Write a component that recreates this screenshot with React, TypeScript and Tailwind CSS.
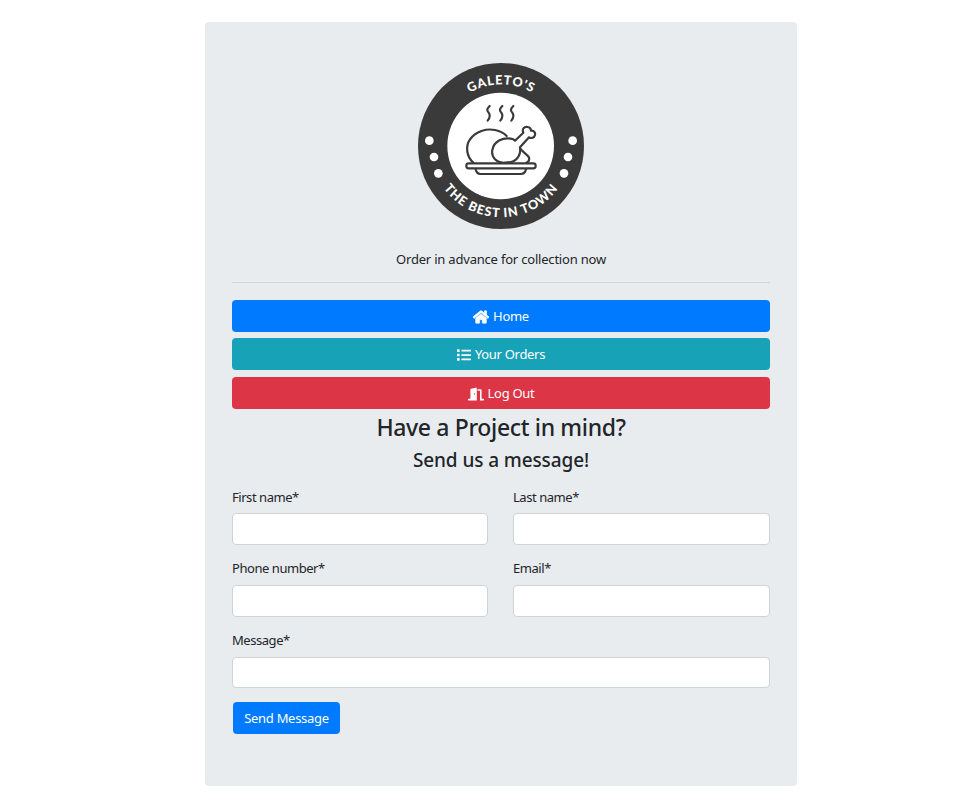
import { FaHome, FaList, FaDoorOpen } from "react-icons/fa";

function Logo() {
  return (
    <svg width="166" height="166" viewBox="39 39 498 498" className="block">
      <defs>
        <path id="topArc" d="M 103 288 A 185 185 0 0 1 473 288" />
        <path id="bottomArc" d="M 74 288 A 214 214 0 0 0 502 288" />
      </defs>
      <circle cx="288" cy="288" r="249" fill="#3a3a3a" />
      <circle cx="287" cy="288" r="160" fill="#ffffff" />
      <text fontFamily="Lato, sans-serif" fontWeight="900" fontSize="38" fill="#fff" letterSpacing="2.5" textAnchor="middle">
        <textPath href="#topArc" startOffset="50%">GALETO'S</textPath>
      </text>
      <text fontFamily="Lato, sans-serif" fontWeight="900" fontSize="38" fill="#fff" letterSpacing="3" textAnchor="middle">
        <textPath href="#bottomArc" startOffset="50%">THE BEST IN TOWN</textPath>
      </text>
      {[[73, 272], [87, 321], [100, 370], [503, 272], [489, 321], [477, 370]].map(([cx, cy]) => (
        <circle key={cx} cx={cx} cy={cy} r="13" fill="#fff" />
      ))}
      <g fill="none" stroke="#3a3a3a" strokeWidth="6.5" strokeLinecap="round" strokeLinejoin="round">
        <path d="M254 168C244 178 246 182 251 188C257 196 256 202 248 212" />
        <path d="M292 168C282 178 284 182 289 188C295 196 294 202 286 212" />
        <path d="M325 168C315 178 317 182 322 188C328 196 327 202 319 212" />
        <path d="M205 338C185 320 180 290 195 268C212 243 245 235 270 240C285 243 298 250 305 258" />
        <path d="M300 338C275 340 258 322 262 300C266 275 295 258 325 268L330 272L355 248C350 238 358 228 368 231C375 232 378 238 378 242C386 240 392 248 390 255C388 264 378 266 372 262L345 292C348 310 340 330 318 336C310 338 305 338 300 338Z" />
        <path d="M345 295C352 305 365 312 372 322C374 330 370 336 364 338" />
        <rect x="184" y="340" width="208" height="15" rx="7" />
        <path d="M212 358c2 9 7 14 14 14h122c8 0 13-5 15-14" />
      </g>
    </svg>
  );
}

function Field({ label, inputClass = "mt-[5px] h-[32px]" }: { label: string; inputClass?: string }) {
  return (
    <div>
      <label className="block text-[13px] leading-[21px] tracking-[-0.45px] text-[#212529]">{label}</label>
      <input className={`block w-full rounded-[4px] border border-[#ced4da] bg-white ${inputClass}`} />
    </div>
  );
}

function NavButton({ color, icon, text, className = "" }: { color: string; icon: React.ReactNode; text: string; className?: string }) {
  return (
    <a className={`flex h-[32px] w-full items-center justify-center gap-[4px] rounded-[4px] pt-px text-[13px] tracking-[-0.3px] text-white ${color} ${className}`}>
      {icon}
      {text}
    </a>
  );
}

export default function App() {
  return (
    <div className="min-h-[810px] bg-white pt-[22px] font-['Noto_Sans',sans-serif] text-[#212529]">
      <div className="ml-[205px] h-[764px] w-[592px] rounded-[4px] bg-[#e9ecef] px-[27px] pt-[41px]">
        <div className="flex justify-center">
          <Logo />
        </div>
        <p className="mt-[20px] text-center text-[13px] leading-[20px] tracking-[-0.2px]">Order in advance for collection now</p>
        <hr className="mt-[13px] border-t border-[#d2d5d9]" />
        <div className="mt-[17px] flex flex-col">
          <NavButton color="bg-[#007bff]" icon={<FaHome size={16} stroke="white" strokeWidth={24} />} text="Home" />
          <NavButton color="bg-[#17a2b8]" icon={<FaList size={14} />} text="Your Orders" className="mt-[6px]" />
          <NavButton color="bg-[#dc3545]" icon={<FaDoorOpen size={16} />} text="Log Out" className="mt-[7px]" />
        </div>
        <h2 className="mt-[2px] text-center text-[23px] font-medium leading-[32px] tracking-[-0.35px] text-[#212529]">Have a Project in mind?</h2>
        <h3 className="mt-[4px] text-center text-[19px] font-medium leading-[27px] tracking-[-0.1px]">Send us a message!</h3>
        <form className="mt-[13px]">
          <div className="grid grid-cols-[256px_257px] gap-x-[25px] gap-y-[13px]">
            <Field label="First name*" />
            <Field label="Last name*" />
            <Field label="Phone number*" inputClass="mt-[6px] h-[32px]" />
            <Field label="Email*" inputClass="mt-[6px] h-[32px]" />
          </div>
          <div className="mt-[13px]">
            <Field label="Message*" inputClass="mt-[6px] h-[31px]" />
          </div>
          <button type="button" className="ml-px mt-[14px] block h-[32px] w-[107px] rounded-[4px] bg-[#007bff] pt-px text-[13px] tracking-[-0.3px] text-white">
            Send Message
          </button>
        </form>
      </div>
    </div>
  );
}
